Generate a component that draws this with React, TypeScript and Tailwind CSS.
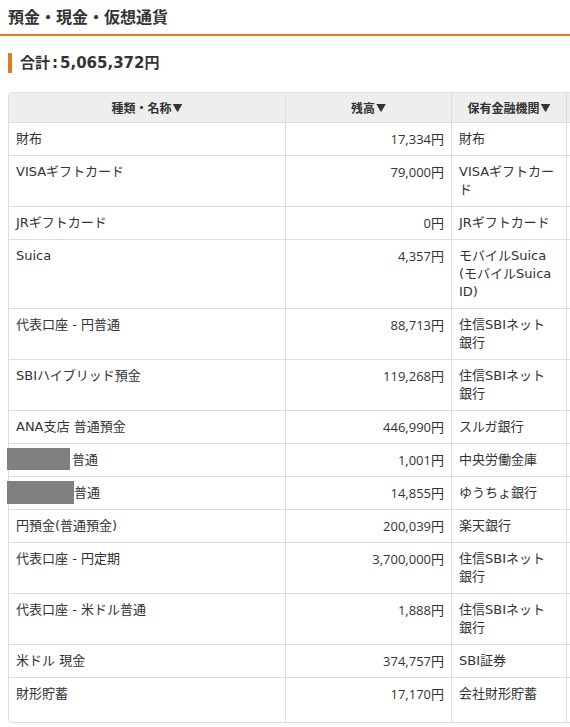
import React from "react";

type Row = {
  name: React.ReactNode;
  amount: string;
  bank: string[];
  last?: boolean;
};

const SBI = ["住信SBIネット", "銀行"];

const rows: Row[] = [
  { name: "財布", amount: "17,334円", bank: ["財布"] },
  { name: "VISAギフトカード", amount: "79,000円", bank: ["VISAギフトカー", "ド"] },
  { name: "JRギフトカード", amount: "0円", bank: ["JRギフトカード"] },
  { name: "Suica", amount: "4,357円", bank: ["モバイルSuica", "(モバイルSuica", "ID)"] },
  { name: "代表口座 - 円普通", amount: "88,713円", bank: SBI },
  { name: "SBIハイブリッド預金", amount: "119,268円", bank: SBI },
  { name: "ANA支店 普通預金", amount: "446,990円", bank: ["スルガ銀行"] },
  {
    name: (
      <>
        <span className="inline-block align-top bg-[#808080] w-[63px] h-[22px] ml-[-9px] mr-[2px] mt-[-3px] mb-[-1px]" />
        普通
      </>
    ),
    amount: "1,001円",
    bank: ["中央労働金庫"],
  },
  {
    name: (
      <>
        <span className="inline-block align-top bg-[#808080] w-[67px] h-[23px] ml-[-9px] mt-[-3px] mb-[-2px]" />
        普通
      </>
    ),
    amount: "14,855円",
    bank: ["ゆうちょ銀行"],
  },
  { name: "円預金(普通預金)", amount: "200,039円", bank: ["楽天銀行"] },
  { name: "代表口座 - 円定期", amount: "3,700,000円", bank: SBI },
  { name: "代表口座 - 米ドル普通", amount: "1,888円", bank: SBI },
  { name: "米ドル 現金", amount: "374,757円", bank: ["SBI証券"] },
  { name: "財形貯蓄", amount: "17,170円", bank: ["会社財形貯蓄"], last: true },
];

function Head({ label }: { label: string }) {
  return (
    <div className="h-[29px] flex items-center justify-center text-[12px] font-bold font-[family-name:Noto_Sans_CJK_JP,sans-serif]">
      {label}
      <span className="text-[10px] ml-[1px]">▼</span>
    </div>
  );
}

export default function App() {
  return (
    <div className="w-[570px] h-[727px] overflow-hidden bg-white text-[#333] font-[family-name:DejaVu_Sans,Noto_Sans_CJK_JP,sans-serif]">
      <div className="h-[36px] px-2 pt-[2px] flex items-center text-[16px] font-bold border-b-2 border-[#e57b1f]">
        預金・現金・仮想通貨
      </div>
      <div className="mt-[17px] ml-2 h-[20px] border-l-4 border-[#e57b1f] pl-2 text-[15px] leading-[20px] font-bold">
        合計<span className="mx-[2px]">:</span>5,065,372円
      </div>
      <div className="mt-[19px] ml-2 w-[700px] border border-[#ddd] rounded-[4px]">
        <table className="table-fixed border-separate border-spacing-0 w-[698px] text-[13px] leading-[18px]">
          <colgroup>
            <col className="w-[277px]" />
            <col className="w-[166px]" />
            <col className="w-[115px]" />
            <col className="w-[140px]" />
          </colgroup>
          <thead>
            <tr>
              <th className="p-0 bg-[#eee] border-b border-r border-[#ddd] rounded-tl-[3px]">
                <Head label="種類・名称" />
              </th>
              <th className="p-0 bg-[#eee] border-b border-r border-[#ddd]">
                <Head label="残高" />
              </th>
              <th className="p-0 bg-[#eee] border-b border-r border-[#ddd]">
                <Head label="保有金融機関" />
              </th>
              <th className="p-0 bg-[#eee] border-b border-[#ddd]">
                <div className="h-[29px]" />
              </th>
            </tr>
          </thead>
          <tbody>
            {rows.map((r, i) => {
              const b = r.last ? "pt-[7px] pb-[19px]" : "py-[7px] border-b";
              return (
                <tr key={i}>
                  <td className={`${b} px-[7px] border-r border-[#ddd] align-top whitespace-nowrap`}>{r.name}</td>
                  <td className={`${b} px-[7px] border-r border-[#ddd] align-top text-right font-[family-name:Open_Sans,Noto_Sans_CJK_JP,sans-serif]`}>
                    {r.amount}
                  </td>
                  <td className={`${b} px-[7px] border-r border-[#ddd] align-top`}>
                    {r.bank.map((l, j) => (
                      <div key={j} className="whitespace-nowrap">
                        {l}
                      </div>
                    ))}
                  </td>
                  <td className={`${b} px-[7px] border-[#ddd] align-top`}></td>
                </tr>
              );
            })}
          </tbody>
        </table>
      </div>
    </div>
  );
}
